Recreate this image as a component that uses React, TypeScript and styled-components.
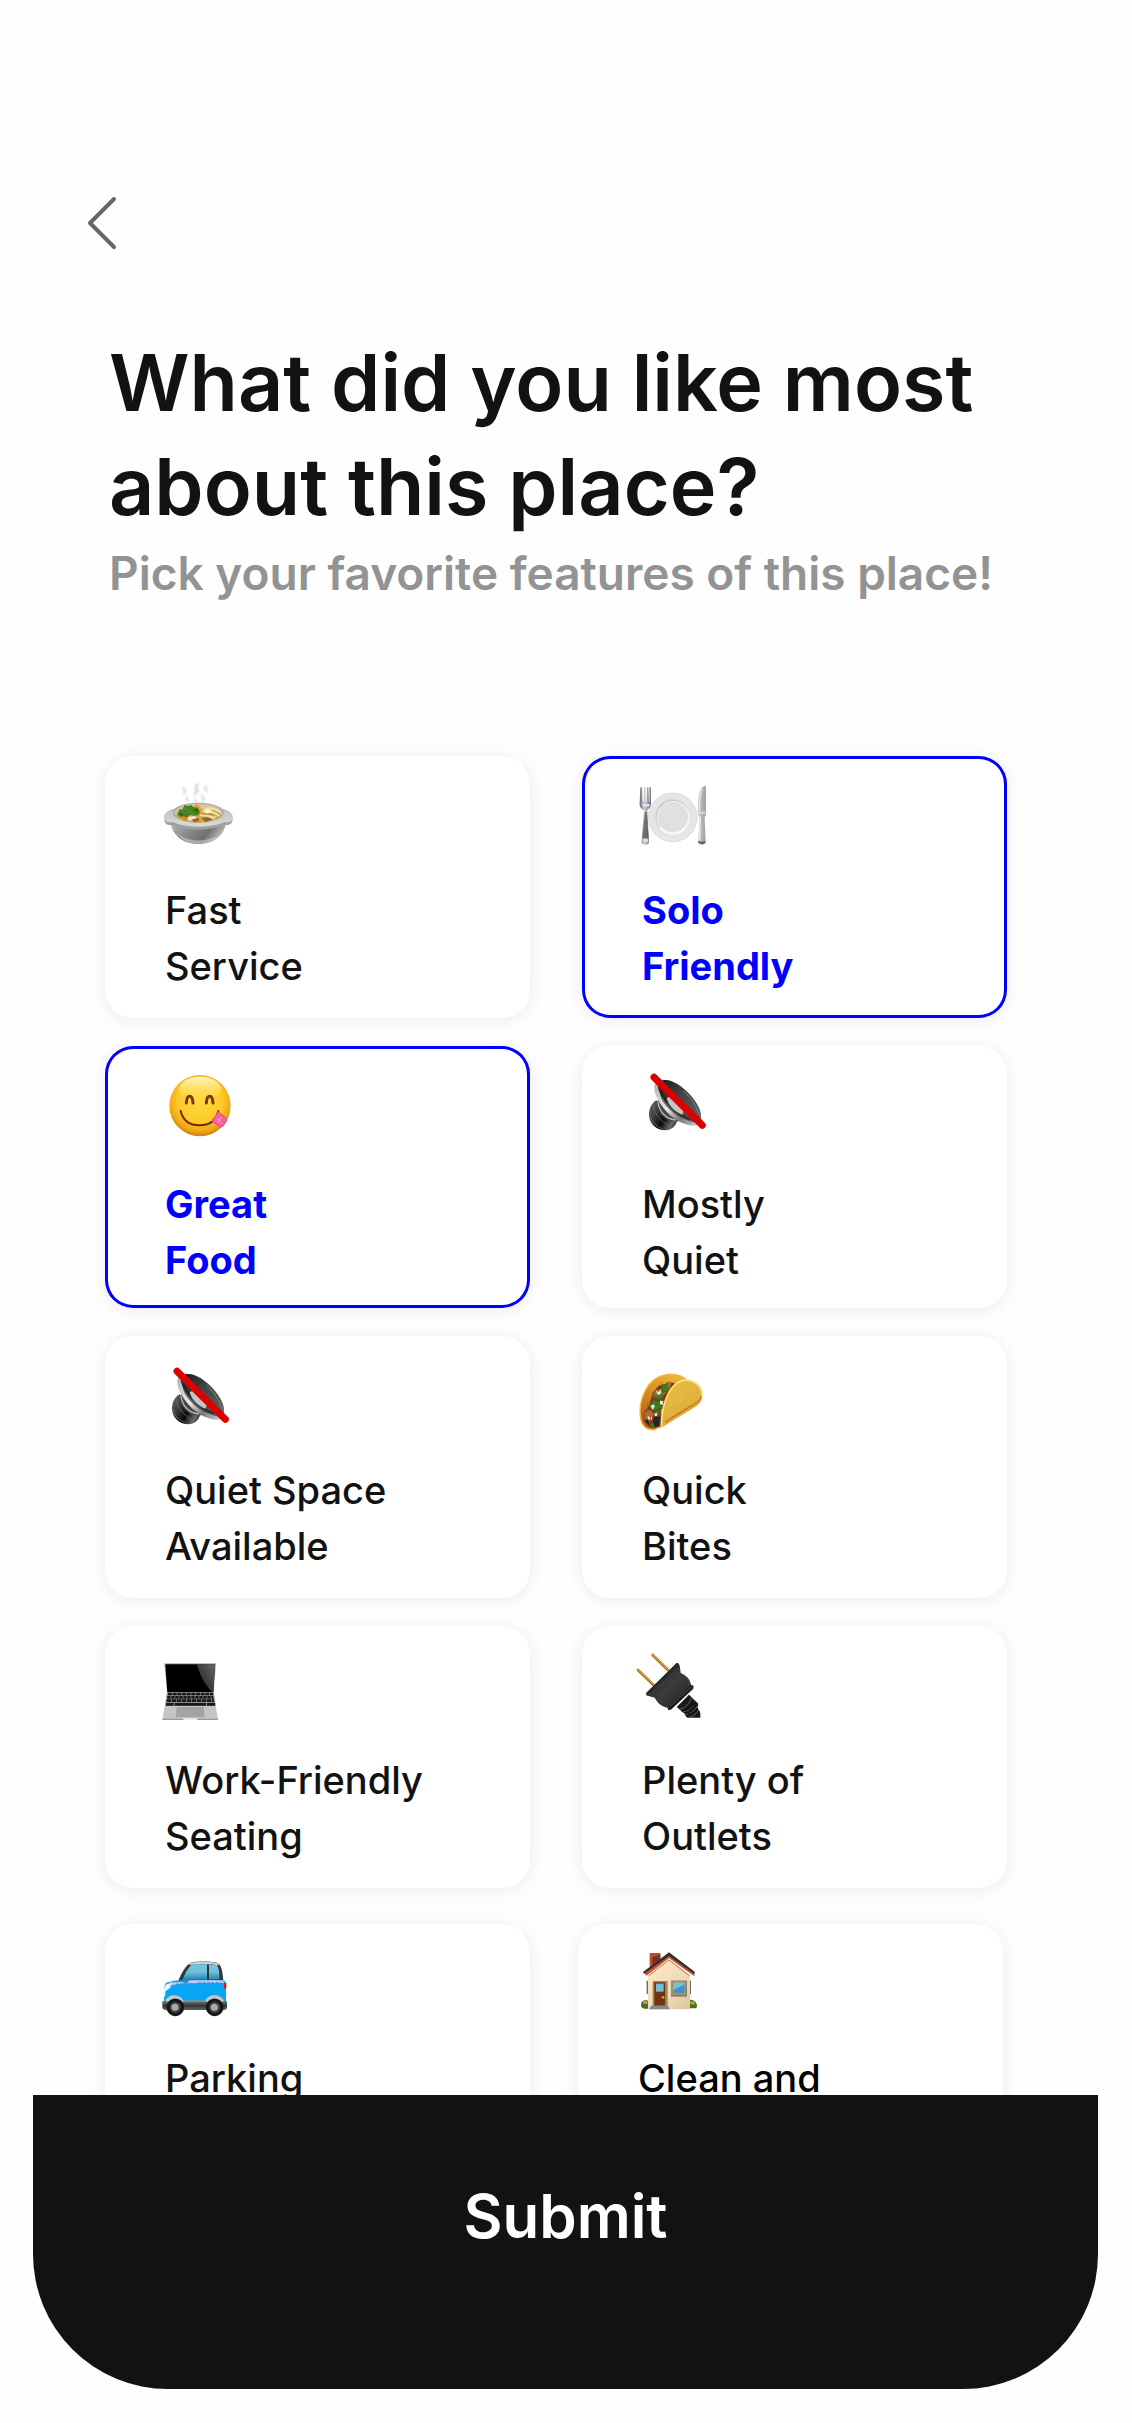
import React, { useState } from 'react';
import styled, { createGlobalStyle } from 'styled-components';

const GlobalStyle = createGlobalStyle`
  * { box-sizing: border-box; }
  body {
    margin: 0;
    background: #ffffff;
    font-family: Inter, 'Liberation Sans', sans-serif;
    color: #121212;
  }
  button { font: inherit; color: inherit; border: 0; cursor: pointer; }
`;

const Screen = styled.div`
  display: flex;
  flex-direction: column;
  height: 100vh;
  background: #fefefe;
`;

const Content = styled.main`
  flex: 1;
  min-height: 0;
  overflow-y: auto;
  scrollbar-width: none;
  padding-top: 196px;
`;

const BackButton = styled.button`
  display: block;
  margin-left: 87px;
  padding: 0;
  background: none;

  svg { display: block; }
`;

const Header = styled.header`
  padding: 80px 105px 0 109px;
`;

const Title = styled.h1`
  margin: 0;
  max-width: 900px;
  font-size: 79px;
  font-weight: 600;
  line-height: 104px;
`;

const Subtitle = styled.p`
  margin: 0;
  font-size: 46px;
  font-weight: 600;
  line-height: 70px;
  color: #939393;
`;

const Options = styled.section`
  padding-top: 148px;
`;

const CardGrid = styled.div<{ $tight?: boolean }>`
  display: grid;
  grid-template-columns: 1fr 1fr;
  row-gap: 28px;
  column-gap: ${(p) => (p.$tight ? 48 : 52)}px;
  padding: ${(p) => (p.$tight ? '36px 129px 36px 105px' : '0 125px 0 105px')};
`;

const Card = styled.button<{ $selected: boolean }>`
  display: flex;
  flex-direction: column;
  align-items: flex-start;
  min-height: 262px;
  padding: 24px 16px 16px 55px;
  border-radius: 28px;
  background: #ffffff;
  text-align: left;
  box-shadow: ${(p) => (p.$selected ? 'inset 0 0 0 3px #0000ff, ' : '')}0 2px 18px rgba(0, 0, 0, 0.08);
`;

const Icon = styled.svg`
  display: block;
  width: 76px;
  height: 76px;
  overflow: visible;
`;

const Label = styled.span<{ $selected: boolean; $lowered?: boolean; $black?: boolean }>`
  padding: ${(p) => (p.$lowered ? 30 : 26)}px 0 0 5px;
  font-size: 38px;
  line-height: 56px;
  white-space: pre-line;
  font-weight: ${(p) => (p.$selected ? 700 : 500)};
  color: ${(p) => (p.$selected ? '#0000ff' : p.$black ? '#000000' : '#121212')};
`;

const SubmitBar = styled.button`
  flex: none;
  height: 294px;
  margin: 0 34px 34px 33px;
  padding: 0 0 52px;
  border-radius: 0 0 135px 135px;
  background: #121212;
  color: #ffffff;
  font-size: 60px;
  font-weight: 600;
`;

function BowlIcon() {
  return (
    <Icon viewBox="210 120 228 228" aria-hidden="true">
      <defs>
        <linearGradient id="bowlSide" x1="0" x2="1" y1="0" y2="0.3">
          <stop offset="0" stopColor="#b9bbba" />
          <stop offset="0.4" stopColor="#8b8d8c" />
          <stop offset="0.75" stopColor="#6f7271" />
          <stop offset="1" stopColor="#b4b6b5" />
        </linearGradient>
        <linearGradient id="bowlRim" x1="0" x2="0" y1="0" y2="1">
          <stop offset="0" stopColor="#b5b7b6" />
          <stop offset="1" stopColor="#dcdddd" />
        </linearGradient>
        <filter id="steam"><feGaussianBlur stdDeviation="2.5" /></filter>
      </defs>
      <g fill="none" stroke="#d6d6d6" strokeWidth="6" strokeLinecap="round" filter="url(#steam)">
        <path d="M280 143q8 10 2 18M290 172l4 12" />
        <path d="M322 134q-8 10 0 18l-7 10" strokeWidth="9" />
        <path d="M349 140q-8 8 2 14M334 166q12 6 3 19M314 178l4 8" />
      </g>
      <path d="M241 240c2 44 36 72 84 72s82-28 84-72z" fill="url(#bowlSide)" />
      <path d="M262 279c25 28 98 31 130 0-16 24-37 33-67 33s-51-12-63-33z" fill="#d2d3d3" opacity=".55" />
      <path d="M252 206c15-12 44-18 73-18s58 6 73 18c17 4 31 13 31 27s-11 20-24 18c-19 9-48 14-80 14s-61-5-80-14c-13 2-23-4-23-18s13-23 30-27z" fill="url(#bowlRim)" />
      <path d="M223 239c6 8 14 9 24 7 41 18 116 18 157 0 10 2 18 0 24-7-1 13-11 18-23 15-44 19-116 19-160 0-12 3-21-2-22-15z" fill="#9fa1a0" />
      <ellipse cx="325" cy="219" rx="76" ry="29" fill="#a9a8a4" />
      <path d="M253 219c4-17 34-27 72-27s68 10 72 27c-4 18-34 29-72 29s-68-11-72-29z" fill="#d8c49a" />
      <path d="M255 226c17 17 39 22 70 22s58-7 70-22l-15-10-112 2z" fill="#cba553" />
      <path d="M343 208q25-9 48 10M348 218q22-7 39 10M330 226q25-2 44 10M353 234q14-6 25-3" fill="none" stroke="#f1dfad" strokeWidth="6" />
      <path d="M346 213q22-7 43 8M343 224q20-7 34 10" fill="none" stroke="#a87a36" strokeWidth="2" />
      <path d="M313 197q4-7 10-1 15 13 17 29-17-4-27-28z" fill="#f58a08" />
      <path d="M316 197q14 8 21 25" fill="none" stroke="#ffb431" strokeWidth="3" />
      <path d="M268 229l20-9 8 17-14 6zM311 238l18 2-2 7-18-1z" fill="#e98a12" />
      <path d="M295 231l20-3 8 8-15 8-15-4z" fill="#f5ead6" />
      <path d="M303 240l20-7 5 7-13 7zM334 235l20-4 13 8-20 7z" fill="#96642d" />
      <path d="M262 222l7-14 8 1 6-13 13 2 6-4 8 7 14 2 6 13-6 10-13 1-9-3-12 8-13-3-8 2z" fill="#43801f" />
      <path d="M271 219l17-13 22 8M279 224l18-9 18 9M289 210l-4-7" fill="none" stroke="#5b942c" strokeWidth="3" />
      <path d="M266 224l10-4 3 7zM310 211l10-5 5 9z" fill="#245711" />
      <path d="M338 215l13-9 15 6-13 8z" fill="#fff6c7" />
    </Icon>
  );
}

function PlateIcon() {
  return (
    <Icon viewBox="231 120 228 228" aria-hidden="true">
      <defs>
        <linearGradient id="cutlery" x1="0" x2="1">
          <stop offset="0" stopColor="#6c6c6e" />
          <stop offset="0.45" stopColor="#cfcfd2" />
          <stop offset="1" stopColor="#606063" />
        </linearGradient>
        <linearGradient id="knife" x1="0" x2="1">
          <stop offset="0" stopColor="#d8d9da" />
          <stop offset="0.5" stopColor="#b2b5b5" />
          <stop offset="1" stopColor="#9ea1a1" />
        </linearGradient>
      </defs>
      <circle cx="338" cy="232" r="73" fill="#e8e8e8" stroke="#cdcdcd" strokeWidth="2" />
      <circle cx="338" cy="230" r="67" fill="#e5e5e5" />
      <circle cx="338" cy="230" r="52" fill="#cccccc" />
      <circle cx="340" cy="233" r="50" fill="#f5f5f7" />
      <circle cx="338" cy="231" r="46" fill="#e0e0e1" />
      <path d="M301 262q13 20 40 20 20-1 31-14" fill="none" stroke="#fbfbff" strokeWidth="5" />
      <path d="M241 142h5l2 43h3l1-43h4l1 43h3l1-43h4l2 43h2l-1-43h4l1 45c1 15-8 21-11 24l5 91c1 9-3 12-10 12s-13-3-12-12l7-91c-9-5-14-10-13-22z" fill="url(#cutlery)" />
      <path d="M255 216h5l6 79h-19z" fill="#4a4a4b" opacity=".7" />
      <path d="M249 298h15v7h-15zM244 191l27 1-5 8h-16z" fill="#dadaff" />
      <path d="M414 218c-2-36 1-70 18-79 4-2 6 0 6 6v76c0 5-4 8-4 14l3 69c0 7-4 10-11 10s-12-3-12-9l4-68c0-8-4-8-4-19z" fill="url(#knife)" />
      <path d="M428 148c-10 18-10 39-9 63" fill="none" stroke="#edeeee" strokeWidth="3" />
      <path d="M415 215h21v6h-20z" fill="#d4d5ff" />
      <path d="M415 303q11 5 21 0v6q-9 7-21 0z" fill="#5e6160" />
      <path d="M421 229l-2 70" stroke="#eeeeef" strokeWidth="4" />
    </Icon>
  );
}

function YumIcon() {
  return (
    <Icon viewBox="210 120 228 228" aria-hidden="true">
      <defs>
        <radialGradient id="face" cx="0.5" cy="0.42" r="0.58">
          <stop offset="0" stopColor="#ffd83d" />
          <stop offset="0.62" stopColor="#fdcb29" />
          <stop offset="0.86" stopColor="#f3a616" />
          <stop offset="1" stopColor="#c67b1b" />
        </radialGradient>
        <linearGradient id="faceShine" x1="0" x2="0" y1="0" y2="1">
          <stop offset="0" stopColor="#fffbd2" stopOpacity="0.95" />
          <stop offset="1" stopColor="#ffe55c" stopOpacity="0" />
        </linearGradient>
      </defs>
      <circle cx="330" cy="227" r="92" fill="url(#face)" />
      <ellipse cx="330" cy="178" rx="63" ry="38" fill="url(#faceShine)" />
      <g fill="none" stroke="#7b3515" strokeWidth="9" strokeLinecap="round">
        <path d="M289 219c1-14 5-20 10-20s9 6 10 20M349 219c1-14 5-20 10-20s9 6 10 20" />
      </g>
      <path d="M272 243c7 29 28 43 57 43 32 0 50-18 56-43" fill="none" stroke="#6f2c12" strokeWidth="6" strokeLinecap="round" />
      <path d="M383 244l25 20q4 4 1 9l-9 14q-5 5-11 2l-18-11q-6-4-2-11 10-8 14-23z" fill="#f8639f" stroke="#df4589" strokeWidth="3" />
      <path d="M383 267l12 9M393 263l-9 15" stroke="#ffb4d0" strokeWidth="4" strokeDasharray="3 4" />
    </Icon>
  );
}

function MutedSpeakerIcon({ x, y, id }: { x: number; y: number; id: string }) {
  return (
    <Icon viewBox={`${x} ${y} 228 228`} aria-hidden="true">
      <defs>
        <linearGradient id={`${id}Magnet`} x1="0" x2="1" y1="0.2" y2="0.8">
          <stop offset="0" stopColor="#626564" />
          <stop offset="0.35" stopColor="#303231" />
          <stop offset="0.58" stopColor="#080808" />
          <stop offset="0.85" stopColor="#6a6c6b" />
          <stop offset="1" stopColor="#252726" />
        </linearGradient>
        <linearGradient id={`${id}Rim`} x1="0" x2="1" y1="0" y2="1">
          <stop offset="0" stopColor="#a7a9a8" />
          <stop offset="0.45" stopColor="#ededed" />
          <stop offset="0.7" stopColor="#777978" />
          <stop offset="1" stopColor="#d8dad9" />
        </linearGradient>
        <linearGradient id={`${id}Cone`} x1="0" x2="1" y1="0" y2="1">
          <stop offset="0" stopColor="#191a1a" />
          <stop offset="0.45" stopColor="#434645" />
          <stop offset="1" stopColor="#5f6261" />
        </linearGradient>
      </defs>
      <path d="M290 211l62 60c-5 20-20 30-36 30-29 0-50-23-49-50 1-17 8-32 23-40z" fill={`url(#${id}Magnet)`} />
      <path d="M270 258q8 28 37 38M280 226q2 32 46 62" fill="none" stroke="#767877" strokeWidth="2" />
      <path d="M294 204c0 20-1 35 10 50 15 18 33 23 60 18z" fill="#454847" />
      <path d="M294 216c3 28 22 50 53 54" fill="none" stroke="#b6b8b7" strokeWidth="4" />
      <path d="M284 164c8-25 48-18 84 10 35 29 61 72 55 101-5 19-46 14-79-9-37-26-67-75-60-102z" fill={`url(#${id}Rim)`} />
      <path d="M299 155c22-15 62 7 90 38 29 32 43 66 28 80-18 13-59-13-88-43-29-31-44-64-30-75z" fill={`url(#${id}Cone)`} />
      <path d="M301 181c24 38 68 80 104 88-32 7-72-21-91-47-11-15-17-29-13-41z" fill="#171818" opacity=".6" />
      <path d="M320 205l14-8 40 39-7 18c-23-8-41-26-47-49z" fill="#c4c5c4" />
      <path d="M372 184q36 36 46 73" fill="none" stroke="#a6a8a7" strokeWidth="3" strokeDasharray="3 2" />
      <path d="M282 142l145 144" stroke="#dc0000" strokeWidth="21" strokeLinecap="round" />
    </Icon>
  );
}

function TacoIcon() {
  return (
    <Icon viewBox="231 120 228 228" aria-hidden="true">
      <defs>
        <linearGradient id="shell" x1="0.2" x2="0.8" y1="0" y2="1">
          <stop offset="0" stopColor="#e7bc46" />
          <stop offset="0.6" stopColor="#e0b13d" />
          <stop offset="1" stopColor="#cd831d" />
        </linearGradient>
        <linearGradient id="shellBack" x1="0.7" x2="0.2" y1="0" y2="1">
          <stop offset="0" stopColor="#eab534" />
          <stop offset="0.45" stopColor="#d78c22" />
          <stop offset="1" stopColor="#bd501a" />
        </linearGradient>
      </defs>
      <path d="M380 180c-17-19-56-24-88-7-37 20-56 73-51 116 3 27 18 43 42 40l24-11z" fill="url(#shellBack)" stroke="#edbd42" strokeWidth="4" />
      <path d="M333 187l15 4-20 36-19 90-27 7c-21-3-34-18-31-44l17-26 10-36 18-21z" fill="#793c21" />
      <path d="M318 189l18-4-8 24-15 5zM277 225l14-17 15 4-3 16-18 7zM253 278l17-9 11 13-10 20-17-4z" fill="#a96e3f" />
      <path d="M309 202l-6-12 12 5 10-12-1 18 9 8-20 2-9 12-9-8zM280 222l16 4 14-13 2 15-10 9-17-2zM270 251l10-4-2-8 13 6 12-2-2 13 9 9-20 2-12 7-4-11-10-3zM285 274l15-3-2 12-12 2zM270 316l7-7 11 8-8 7z" fill="#378217" />
      <path d="M286 212l10 4 6-9 2 12-8 7zM300 242l10 1-1 12-9-2zM272 257l9-4 4 7-8 9zM263 289l14 2-1 9-12-2zM304 268h8v13h-8zM282 281l9-2 1 8-7 2z" fill="#e8e5df" />
      <path d="M281 291l21-1-6 29-13 1-4-18zM254 302l9-4 7 21z" fill="#202824" />
      <path d="M262 270l8 15 2 16M306 223l12-6M265 247l-6 22" fill="none" stroke="#d05d23" strokeWidth="4" />
      <path d="M303 321c-1-31 7-76 24-107 19-33 51-42 77-28 21 11 28 38 19 57-5 11-16 17-29 25l-71 43c-7 5-13 9-20 10z" fill="url(#shell)" />
      <path d="M304 319c0-32 7-73 24-104 19-33 49-43 75-28 15 8 24 23 24 40" fill="none" stroke="#ffe47a" strokeWidth="5" />
      <path d="M315 307c27-18 55-35 80-50 17-10 27-16 29-28" fill="none" stroke="#c4791c" strokeWidth="4" />
      <path d="M342 213l27-17M337 234l36-18M332 254l38-17" stroke="#ffe04f" strokeWidth="3" strokeDasharray="2 8" />
    </Icon>
  );
}

function LaptopIcon() {
  return (
    <Icon viewBox="210 120 228 228" aria-hidden="true">
      <defs>
        <linearGradient id="glare" x1="0" x2="1" y1="1" y2="0">
          <stop offset="0" stopColor="#151616" />
          <stop offset="1" stopColor="#656867" />
        </linearGradient>
      </defs>
      <path d="M223 160h155l-7 88H231z" fill="#a9acab" />
      <path d="M226 163h149l-5 84H232z" fill="#000000" />
      <path d="M320 163h55l-5 84h-3q-30-28-47-84z" fill="url(#glare)" />
      <path d="M231 247h140l13 82H217z" fill="#c4c5c4" />
      <path d="M231 247h140l6 41H226z" fill="#8d8f8e" />
      <g stroke="#171817" strokeWidth="8">
        <path d="M234 252h135" strokeDasharray="12 2" />
        <path d="M232 262h138" strokeDasharray="10 2" />
        <path d="M230 272h142" strokeDasharray="13 2" />
        <path d="M228 283h23M254 283h94M351 283h24" />
      </g>
      <path d="M260 291h81l3 31h-87z" fill="#a2a4a3" />
      <path d="M217 326h60l4 3h39l4-3h60v4H217z" fill="#9a9c9b" />
      <path d="M278 325h46l-4 5h-38z" fill="#eeeeee" />
    </Icon>
  );
}

function PlugIcon() {
  return (
    <Icon viewBox="231 120 228 228" aria-hidden="true">
      <defs>
        <linearGradient id="plugBody" x1="0" x2="1" y1="0" y2="1">
          <stop offset="0" stopColor="#1d1f1e" />
          <stop offset="0.5" stopColor="#393c3b" />
          <stop offset="1" stopColor="#1e201f" />
        </linearGradient>
        <clipPath id="cordEnd"><path d="M330 240h91v83h-91z" /></clipPath>
      </defs>
      <path d="M278 135l49 48M234 180l49 47" stroke="#a9681b" strokeWidth="8" strokeLinecap="round" />
      <path d="M278 134l49 48M234 179l49 47" stroke="#eec14d" strokeWidth="3" strokeLinecap="round" />
      <g clipPath="url(#cordEnd)">
        <path d="M350 291l37-37 28 27-3 13 25 36-56-7-7-12z" fill="#181a19" />
        <path d="M360 297q23-3 35-34M368 306q28-4 37-33M374 316q25-3 38-28M384 323q20-4 31-22" fill="none" stroke="#5c5f5e" strokeWidth="3" />
        <path d="M365 304q28-5 41-30M378 318q23-6 36-24" fill="none" stroke="#030303" strokeWidth="3" />
      </g>
      <path d="M351 158q8 2 9 15l2 16q26 10 31 35l8 5-1 7-67 63-8 2-3-8c-16-3-29-13-38-30l-26-7 2-7z" fill="url(#plugBody)" />
      <path d="M350 159l6 12-80 76-17 6-1-4z" fill="#282a29" />
      <path d="M352 175l-76 73M361 189q23 13 27 35" fill="none" stroke="#4e5150" strokeWidth="2" />
      <path d="M326 291l70-66 4 5-68 68z" fill="#141615" />
      <path d="M330 290l68-63" stroke="#4f5251" strokeWidth="3" />
    </Icon>
  );
}

function CarIcon() {
  return (
    <Icon viewBox="210 145 228 228" aria-hidden="true">
      <defs>
        <linearGradient id="carGlass" x1="0" x2="0" y1="0" y2="1">
          <stop offset="0" stopColor="#70c6df" />
          <stop offset="0.5" stopColor="#6ec0dc" />
          <stop offset="1" stopColor="#2584b5" />
        </linearGradient>
        <linearGradient id="bumper" x1="0" x2="0" y1="0" y2="1">
          <stop offset="0" stopColor="#787b7b" />
          <stop offset="0.5" stopColor="#343737" />
          <stop offset="1" stopColor="#5e6161" />
        </linearGradient>
      </defs>
      <path d="M264 245c11-26 22-47 38-56 18-5 58-5 79 0 13 6 16 21 19 55z" fill="#343739" />
      <path d="M300 190q43-9 81 0l7 7q-42-6-91-1z" fill="#cbd0d2" />
      <path d="M278 240c8-22 19-39 30-46h43v46zM357 195l24 1q8 13 7 43l-31 1z" fill="url(#carGlass)" />
      <path d="M228 249q23-7 43-7h128q8 0 9 12v54H222v-30q-1-20 6-29z" fill="#08a5f2" />
      <path d="M240 248h42l18-6h98l5 8h-70l-50 1-42 6z" fill="#c5c9f4" />
      <path d="M258 253h52M325 249h68" stroke="#3a94ed" strokeWidth="3" strokeDasharray="8 5" />
      <path d="M227 255q10-6 16-4l-2 13-14 10-2 17-4-1q-1-25 6-35z" fill="#eaf6ff" />
      <path d="M276 239q9-4 19 0v9l-10 3-9-5z" fill="#178ed4" />
      <path d="M402 250h7v16h-7z" fill="#e40b12" />
      <path d="M217 304h194v21q-1 6-10 6H225q-8-1-8-8z" fill="url(#bumper)" />
      <path d="M277 304h76" stroke="#8e9290" strokeWidth="4" />
      <path d="M226 303c7-22 48-23 55 3h-10q-18-16-37 1zM346 304c7-23 49-22 56 0l-9 4q-20-16-38 0z" fill="#c2c6c4" />
      <g stroke="#171918" strokeWidth="11" fill="#777a79">
        <circle cx="256" cy="323" r="21" />
        <circle cx="374" cy="323" r="21" />
      </g>
      <g fill="#a7aaa8" stroke="#414443" strokeWidth="5">
        <circle cx="255" cy="323" r="13" />
        <circle cx="373" cy="323" r="13" />
      </g>
    </Icon>
  );
}

function HouseIcon() {
  return (
    <Icon viewBox="219 145 228 228" aria-hidden="true">
      <defs>
        <linearGradient id="wall" x1="0" x2="1" y1="0" y2="1">
          <stop offset="0" stopColor="#ffebc8" />
          <stop offset="0.65" stopColor="#edd9b4" />
          <stop offset="1" stopColor="#dfc59d" />
        </linearGradient>
      </defs>
      <path d="M260 243h7v40h-7zM387 243h6v40h-6z" fill="#6c6760" />
      <path d="M243 319q-1-16 13-18 15-1 15 26h-18q-9-1-10-8zM387 301q13-4 20 7 8 11 1 18h-21z" fill="#437021" />
      <path d="M249 305q7-5 13-1v9h-11zM391 304q11-2 15 9-9 4-15-1z" fill="#bb9a4d" />
      <path d="M269 160h32v31l-32 22z" fill="#c5482a" />
      <path d="M277 173l24-9v29l-24 19z" fill="#78341f" />
      <path d="M327 174l63 51v104H264V224z" fill="url(#wall)" />
      <path d="M250 216l77-56 77 56-1 14-76-55-68 53z" fill="#c5502c" />
      <path d="M249 218l78-60 78 60-3 4-75-53-75 53z" fill="#2d3038" />
      <path d="M266 228l61-47 61 47" fill="none" stroke="#9f3b23" strokeWidth="2" />
      <path d="M278 244h45v76h-45z" fill="#a5874b" />
      <path d="M283 248h32v70h-32z" fill="#733218" />
      <path d="M288 252h23v24h-23z" fill="#70c0dc" />
      <path d="M317 247v70" stroke="#7f8580" strokeWidth="4" />
      <circle cx="309" cy="293" r="4" fill="#e6a12f" />
      <path d="M333 243h48v48h-48z" fill="#807f79" />
      <path d="M333 243h45v43h-45z" fill="#ad8e4e" />
      <path d="M340 248h33v33h-33z" fill="#72c1dd" />
      <path d="M341 270l32-15v26h-33z" fill="#3f91ce" />
      <path d="M273 318h51l6 11h-62z" fill="#858889" />
    </Icon>
  );
}

type Option = {
  id: string;
  label: string;
  icon: React.ReactNode;
  lowered?: boolean;
  black?: boolean;
};

const mainOptions: Option[] = [
  { id: 'fast', label: 'Fast\nService', icon: <BowlIcon /> },
  { id: 'solo', label: 'Solo\nFriendly', icon: <PlateIcon /> },
  { id: 'food', label: 'Great\nFood', icon: <YumIcon />, lowered: true },
  { id: 'quiet', label: 'Mostly\nQuiet', icon: <MutedSpeakerIcon id="mostly" x={231} y={120} />, lowered: true },
  { id: 'space', label: 'Quiet Space\nAvailable', icon: <MutedSpeakerIcon id="space" x={231} y={108} /> },
  { id: 'bites', label: 'Quick\nBites', icon: <TacoIcon /> },
  { id: 'work', label: 'Work-Friendly\nSeating', icon: <LaptopIcon /> },
  { id: 'outlets', label: 'Plenty of\nOutlets', icon: <PlugIcon /> },
];

const moreOptions: Option[] = [
  { id: 'parking', label: 'Parking', icon: <CarIcon /> },
  { id: 'clean', label: 'Clean and', icon: <HouseIcon />, black: true },
];

export default function App() {
  const [picked, setPicked] = useState<string[]>(['solo', 'food']);

  const toggle = (id: string) =>
    setPicked((ids) => (ids.includes(id) ? ids.filter((other) => other !== id) : [...ids, id]));

  const renderCard = (option: Option) => {
    const selected = picked.includes(option.id);
    return (
      <Card
        key={option.id}
        type="button"
        aria-pressed={selected}
        $selected={selected}
        onClick={() => toggle(option.id)}
      >
        {option.icon}
        <Label $selected={selected} $lowered={option.lowered} $black={option.black}>
          {option.label}
        </Label>
      </Card>
    );
  };

  return (
    <Screen>
      <GlobalStyle />
      <Content>
        <BackButton type="button" aria-label="Back">
          <svg width="30" height="54" viewBox="0 0 30 54" fill="none">
            <path d="M27 3L3 27l24 24" stroke="#666666" strokeWidth="4" strokeLinecap="round" strokeLinejoin="round" />
          </svg>
        </BackButton>
        <Header>
          <Title>What did you like most about this place?</Title>
          <Subtitle>Pick your favorite features of this place!</Subtitle>
        </Header>
        <Options aria-label="Features">
          <CardGrid>{mainOptions.map(renderCard)}</CardGrid>
          <CardGrid $tight>{moreOptions.map(renderCard)}</CardGrid>
        </Options>
      </Content>
      <SubmitBar type="button">Submit</SubmitBar>
    </Screen>
  );
}
